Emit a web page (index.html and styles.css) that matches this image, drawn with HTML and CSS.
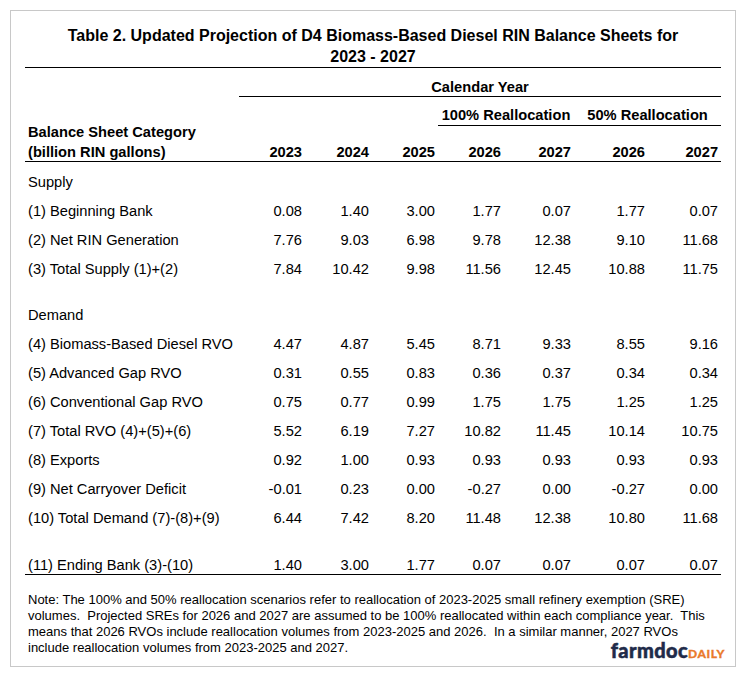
FILE: index.html
```html
<!DOCTYPE html>
<html lang="en">
<head>
<meta charset="utf-8">
<title>Table 2</title>
<link rel="stylesheet" href="styles.css">
</head>
<body>
<div class="card">
  <h1 class="title">Table 2. Updated Projection of D4 Biomass-Based Diesel RIN Balance Sheets for<br>2023 - 2027</h1>
  <table class="rin">
    <colgroup>
      <col class="c-label"><col class="c-a"><col class="c-b"><col class="c-a"><col class="c-a"><col class="c-c"><col class="c-d"><col class="c-e">
    </colgroup>
    <thead>
      <tr class="h-cal">
        <th class="h-label" rowspan="3"><span class="l1">Balance Sheet Category</span><span class="l2">(billion RIN gallons)</span></th>
        <th class="h-group" colspan="7">Calendar Year</th>
      </tr>
      <tr class="h-scn">
        <th class="h-blank" colspan="3"></th>
        <th class="h-group" colspan="2">100% Reallocation</th>
        <th class="h-group" colspan="2">50% Reallocation</th>
      </tr>
      <tr class="h-year">
        <th>2023</th><th>2024</th><th>2025</th><th>2026</th><th>2027</th><th>2026</th><th>2027</th>
      </tr>
    </thead>
    <tbody>
      <tr class="first"><td class="lab" colspan="8">Supply</td></tr>
      <tr><td class="lab">(1) Beginning Bank</td><td>0.08</td><td>1.40</td><td>3.00</td><td>1.77</td><td>0.07</td><td>1.77</td><td>0.07</td></tr>
      <tr><td class="lab">(2) Net RIN Generation</td><td>7.76</td><td>9.03</td><td>6.98</td><td>9.78</td><td>12.38</td><td>9.10</td><td>11.68</td></tr>
      <tr><td class="lab">(3) Total Supply (1)+(2)</td><td>7.84</td><td>10.42</td><td>9.98</td><td>11.56</td><td>12.45</td><td>10.88</td><td>11.75</td></tr>
      <tr class="gap"><td colspan="8"></td></tr>
      <tr><td class="lab" colspan="8">Demand</td></tr>
      <tr><td class="lab">(4) Biomass-Based Diesel RVO</td><td>4.47</td><td>4.87</td><td>5.45</td><td>8.71</td><td>9.33</td><td>8.55</td><td>9.16</td></tr>
      <tr><td class="lab">(5) Advanced Gap RVO</td><td>0.31</td><td>0.55</td><td>0.83</td><td>0.36</td><td>0.37</td><td>0.34</td><td>0.34</td></tr>
      <tr><td class="lab">(6) Conventional Gap RVO</td><td>0.75</td><td>0.77</td><td>0.99</td><td>1.75</td><td>1.75</td><td>1.25</td><td>1.25</td></tr>
      <tr><td class="lab">(7) Total RVO (4)+(5)+(6)</td><td>5.52</td><td>6.19</td><td>7.27</td><td>10.82</td><td>11.45</td><td>10.14</td><td>10.75</td></tr>
      <tr><td class="lab">(8) Exports</td><td>0.92</td><td>1.00</td><td>0.93</td><td>0.93</td><td>0.93</td><td>0.93</td><td>0.93</td></tr>
      <tr><td class="lab">(9) Net Carryover Deficit</td><td>-0.01</td><td>0.23</td><td>0.00</td><td>-0.27</td><td>0.00</td><td>-0.27</td><td>0.00</td></tr>
      <tr><td class="lab">(10) Total Demand (7)-(8)+(9)</td><td>6.44</td><td>7.42</td><td>8.20</td><td>11.48</td><td>12.38</td><td>10.80</td><td>11.68</td></tr>
      <tr class="last"><td class="lab">(11) Ending Bank (3)-(10)</td><td>1.40</td><td>3.00</td><td>1.77</td><td>0.07</td><td>0.07</td><td>0.07</td><td>0.07</td></tr>
    </tbody>
  </table>
  <p class="note"><span class="nl">Note: The 100% and 50% reallocation scenarios refer to reallocation of 2023-2025 small refinery exemption (SRE)</span><span class="nl">volumes.&nbsp; Projected SREs for 2026 and 2027 are assumed to be 100% reallocated within each compliance year.&nbsp; This</span><span class="nl">means that 2026 RVOs include reallocation volumes from 2023-2025 and 2026.&nbsp; In a similar manner, 2027 RVOs</span><span class="nl">include reallocation volumes from 2023-2025 and 2027.</span></p>
  <div class="logo"><span class="logo-farm">farmdoc</span><span class="logo-daily">DAILY</span></div>
</div>
</body>
</html>
```
FILE: styles.css
```css
* { box-sizing: border-box; }
html, body { margin: 0; padding: 0; background: #fff; }
body {
  padding: 10px;
  font-family: "Liberation Sans", Arial, sans-serif;
  color: #000;
}
.card {
  position: relative;
  width: 726px;
  height: 657px;
  border: 1px solid #c8c8c8;
  padding: 15px 14px 0;
}
.title {
  margin: 0;
  font-size: 16px;
  font-weight: bold;
  line-height: 20.5px;
  text-align: center;
  border-bottom: 1px solid #000;
}
.rin {
  width: 696px;
  table-layout: fixed;
  border-collapse: separate;
  border-spacing: 0;
  font-size: 14.67px;
}
.c-label { width: 214px; }
.c-a { width: 66px; }
.c-b { width: 67px; }
.c-c { width: 70px; }
.c-d { width: 74px; }
.c-e { width: 73px; }

.rin th {
  font-weight: bold;
  line-height: 17px;
  padding: 0 3px;
  white-space: nowrap;
}
.h-label {
  text-align: left;
  vertical-align: bottom;
  border-bottom: 1px solid #000;
}
.h-label .l1, .h-label .l2 { display: block; }
.h-label .l1 { margin-bottom: 3px; }
.h-cal .h-group {
  text-align: center;
  padding-top: 11px;
  border-bottom: 1px solid #000;
  vertical-align: bottom;
}
.h-scn .h-group {
  text-align: center;
  padding-top: 10px;
  padding-bottom: 1px;
  border-bottom: 1px solid #000;
  vertical-align: bottom;
}
.h-blank { padding: 0; }
.h-year th {
  text-align: right;
  padding-top: 18px;
  border-bottom: 1px solid #000;
  vertical-align: bottom;
}

.rin td {
  padding: 0 3px;
  line-height: 29px;
  text-align: right;
  white-space: nowrap;
  vertical-align: bottom;
}
.rin td.lab { text-align: left; }
.rin tr.first td { padding-top: 6px; }
.rin tr.gap td { height: 17px; padding: 0; line-height: 0; }
.rin tr.last td {
  padding-top: 24px;
  line-height: 17px;
  border-bottom: 1px solid #000;
}

.note {
  margin: 17px 0 0;
  padding-left: 3px;
  font-size: 13px;
  line-height: 16px;
}
.nl { display: block; white-space: nowrap; }

.logo {
  position: absolute;
  right: 10px;
  bottom: 2px;
  line-height: 20px;
  white-space: nowrap;
}
.logo-farm {
  font-family: Lato, "Liberation Sans", sans-serif;
  font-weight: 900;
  font-size: 20px;
  color: #1f2b4a;
  letter-spacing: 0.4px;
  -webkit-text-stroke: 0.5px #1f2b4a;
}
.logo-daily {
  font-family: Lato, "Liberation Sans", sans-serif;
  font-weight: 900;
  font-size: 12px;
  color: #ea7a2c;
  letter-spacing: 0.6px;
  -webkit-text-stroke: 0.3px #ea7a2c;
}
```
